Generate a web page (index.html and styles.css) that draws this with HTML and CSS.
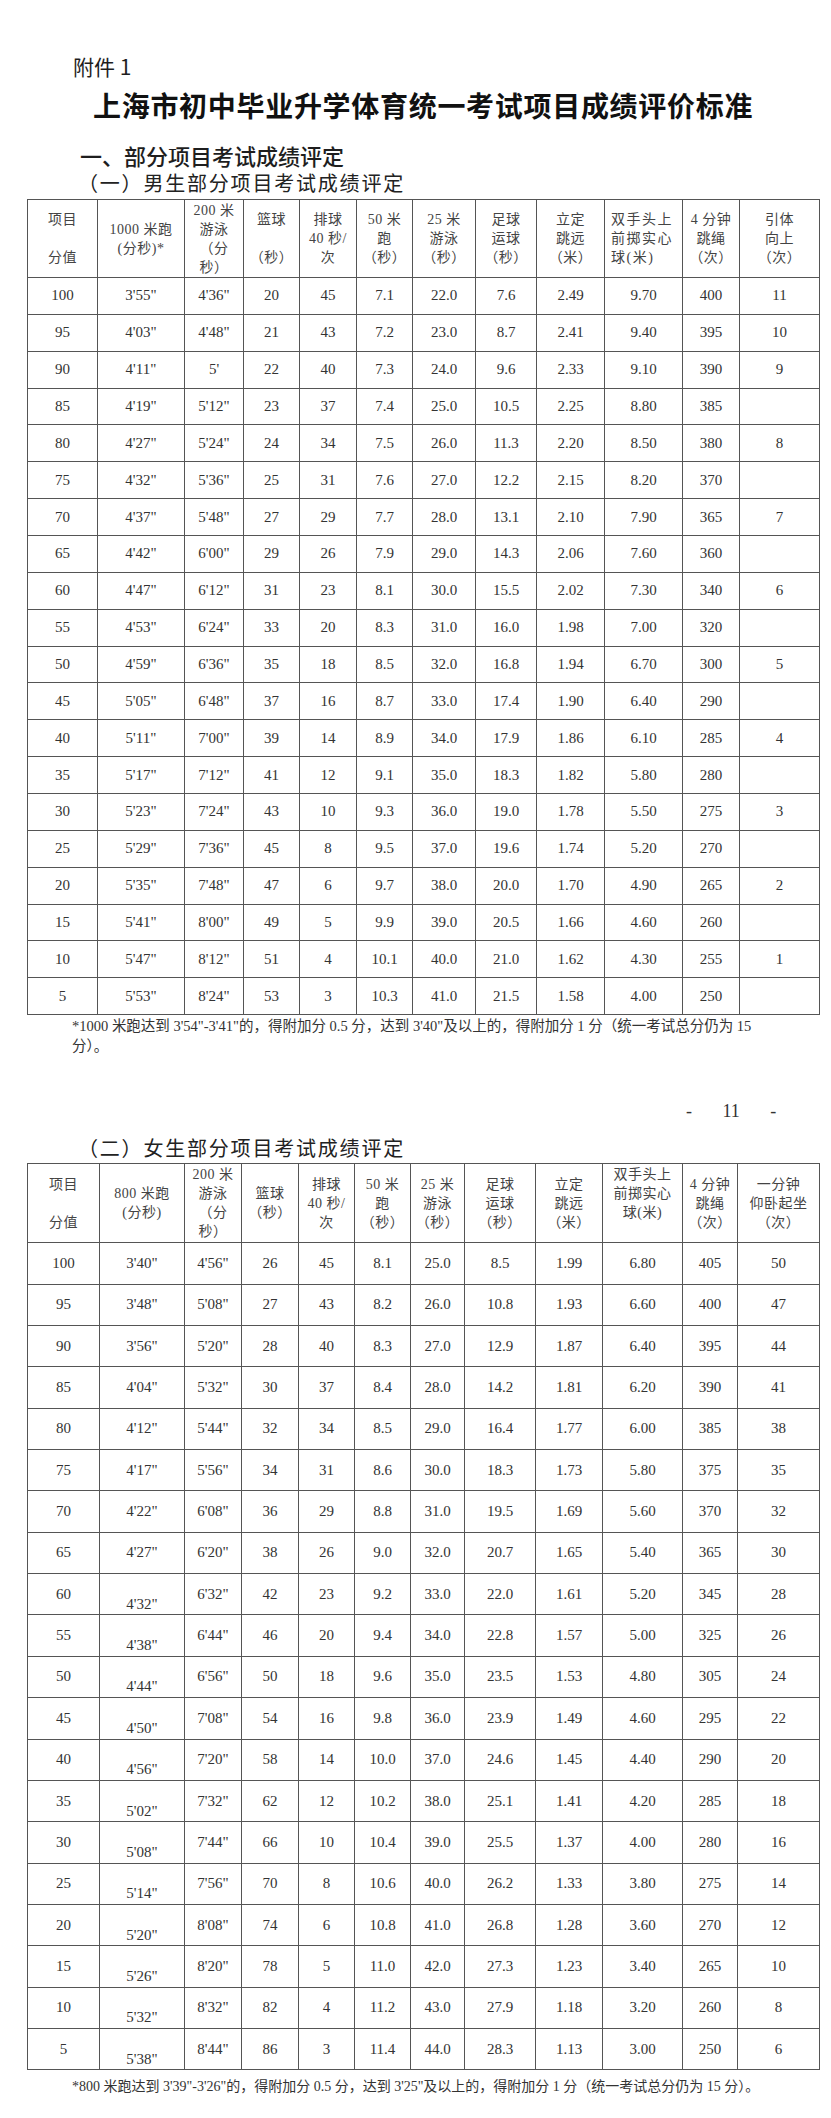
FILE: index.html
```html
<!DOCTYPE html>
<html lang="zh-CN">
<head>
<meta charset="utf-8">
<title>上海市初中毕业升学体育统一考试项目成绩评价标准</title>
<link rel="stylesheet" href="styles.css">
</head>
<body>
<div class="page">
  <div class="annex">附件 1</div>
  <h1 class="title">上海市初中毕业升学体育统一考试项目成绩评价标准</h1>
  <h2 class="sec">一、部分项目考试成绩评定</h2>
  <h3 class="sub">（一）男生部分项目考试成绩评定</h3>
  <table class="score boys">
    <colgroup>
      <col style="width:70px"><col style="width:87px"><col style="width:59px"><col style="width:56px"><col style="width:57px"><col style="width:56px"><col style="width:63px"><col style="width:61px"><col style="width:68px"><col style="width:78px"><col style="width:57px"><col style="width:80px">
    </colgroup>
    <thead>
      <tr>
        <td>项目<br>&nbsp;<br>分值</td>
        <td>1000 米跑<br>(分秒)*</td>
        <td>200 米<br>游泳<br>（分<br>秒）</td>
        <td>篮球<br>&nbsp;<br>（秒）</td>
        <td>排球<br>40 秒/<br>次</td>
        <td>50 米<br>跑<br>（秒）</td>
        <td>25 米<br>游泳<br>（秒）</td>
        <td>足球<br>运球<br>（秒）</td>
        <td>立定<br>跳远<br>（米）</td>
        <td class="left">双手头上<br>前掷实心<br>球(米)</td>
        <td>4 分钟<br>跳绳<br>（次）</td>
        <td>引体<br>向上<br>（次）</td>
      </tr>
    </thead>
    <tbody>
      <tr><td>100</td><td>3'55"</td><td>4'36"</td><td>20</td><td>45</td><td>7.1</td><td>22.0</td><td>7.6</td><td>2.49</td><td>9.70</td><td>400</td><td>11</td></tr>
      <tr><td>95</td><td>4'03"</td><td>4'48"</td><td>21</td><td>43</td><td>7.2</td><td>23.0</td><td>8.7</td><td>2.41</td><td>9.40</td><td>395</td><td>10</td></tr>
      <tr><td>90</td><td>4'11"</td><td>5'</td><td>22</td><td>40</td><td>7.3</td><td>24.0</td><td>9.6</td><td>2.33</td><td>9.10</td><td>390</td><td>9</td></tr>
      <tr><td>85</td><td>4'19"</td><td>5'12"</td><td>23</td><td>37</td><td>7.4</td><td>25.0</td><td>10.5</td><td>2.25</td><td>8.80</td><td>385</td><td></td></tr>
      <tr><td>80</td><td>4'27"</td><td>5'24"</td><td>24</td><td>34</td><td>7.5</td><td>26.0</td><td>11.3</td><td>2.20</td><td>8.50</td><td>380</td><td>8</td></tr>
      <tr><td>75</td><td>4'32"</td><td>5'36"</td><td>25</td><td>31</td><td>7.6</td><td>27.0</td><td>12.2</td><td>2.15</td><td>8.20</td><td>370</td><td></td></tr>
      <tr><td>70</td><td>4'37"</td><td>5'48"</td><td>27</td><td>29</td><td>7.7</td><td>28.0</td><td>13.1</td><td>2.10</td><td>7.90</td><td>365</td><td>7</td></tr>
      <tr><td>65</td><td>4'42"</td><td>6'00"</td><td>29</td><td>26</td><td>7.9</td><td>29.0</td><td>14.3</td><td>2.06</td><td>7.60</td><td>360</td><td></td></tr>
      <tr><td>60</td><td>4'47"</td><td>6'12"</td><td>31</td><td>23</td><td>8.1</td><td>30.0</td><td>15.5</td><td>2.02</td><td>7.30</td><td>340</td><td>6</td></tr>
      <tr><td>55</td><td>4'53"</td><td>6'24"</td><td>33</td><td>20</td><td>8.3</td><td>31.0</td><td>16.0</td><td>1.98</td><td>7.00</td><td>320</td><td></td></tr>
      <tr><td>50</td><td>4'59"</td><td>6'36"</td><td>35</td><td>18</td><td>8.5</td><td>32.0</td><td>16.8</td><td>1.94</td><td>6.70</td><td>300</td><td>5</td></tr>
      <tr><td>45</td><td>5'05"</td><td>6'48"</td><td>37</td><td>16</td><td>8.7</td><td>33.0</td><td>17.4</td><td>1.90</td><td>6.40</td><td>290</td><td></td></tr>
      <tr><td>40</td><td>5'11"</td><td>7'00"</td><td>39</td><td>14</td><td>8.9</td><td>34.0</td><td>17.9</td><td>1.86</td><td>6.10</td><td>285</td><td>4</td></tr>
      <tr><td>35</td><td>5'17"</td><td>7'12"</td><td>41</td><td>12</td><td>9.1</td><td>35.0</td><td>18.3</td><td>1.82</td><td>5.80</td><td>280</td><td></td></tr>
      <tr><td>30</td><td>5'23"</td><td>7'24"</td><td>43</td><td>10</td><td>9.3</td><td>36.0</td><td>19.0</td><td>1.78</td><td>5.50</td><td>275</td><td>3</td></tr>
      <tr><td>25</td><td>5'29"</td><td>7'36"</td><td>45</td><td>8</td><td>9.5</td><td>37.0</td><td>19.6</td><td>1.74</td><td>5.20</td><td>270</td><td></td></tr>
      <tr><td>20</td><td>5'35"</td><td>7'48"</td><td>47</td><td>6</td><td>9.7</td><td>38.0</td><td>20.0</td><td>1.70</td><td>4.90</td><td>265</td><td>2</td></tr>
      <tr><td>15</td><td>5'41"</td><td>8'00"</td><td>49</td><td>5</td><td>9.9</td><td>39.0</td><td>20.5</td><td>1.66</td><td>4.60</td><td>260</td><td></td></tr>
      <tr><td>10</td><td>5'47"</td><td>8'12"</td><td>51</td><td>4</td><td>10.1</td><td>40.0</td><td>21.0</td><td>1.62</td><td>4.30</td><td>255</td><td>1</td></tr>
      <tr><td>5</td><td>5'53"</td><td>8'24"</td><td>53</td><td>3</td><td>10.3</td><td>41.0</td><td>21.5</td><td>1.58</td><td>4.00</td><td>250</td><td></td></tr>
    </tbody>
  </table>
  <p class="note note-boys">*1000 米跑达到 3'54"-3'41"的，得附加分 0.5 分，达到 3'40"及以上的，得附加分 1 分（统一考试总分仍为 15<br>分）。</p>
  <div class="pageno">- 11 -</div>
  <h3 class="sub sub-girls">（二）女生部分项目考试成绩评定</h3>
  <table class="score girls">
    <colgroup>
      <col style="width:72px"><col style="width:85px"><col style="width:57px"><col style="width:57px"><col style="width:56px"><col style="width:56px"><col style="width:54px"><col style="width:71px"><col style="width:67px"><col style="width:80px"><col style="width:55px"><col style="width:82px">
    </colgroup>
    <thead>
      <tr>
        <td>项目<br>&nbsp;<br>分值</td>
        <td>800 米跑<br>(分秒)</td>
        <td>200 米<br>游泳<br>（分<br>秒）</td>
        <td>篮球<br>（秒）</td>
        <td>排球<br>40 秒/<br>次</td>
        <td>50 米<br>跑<br>（秒）</td>
        <td>25 米<br>游泳<br>（秒）</td>
        <td>足球<br>运球<br>（秒）</td>
        <td>立定<br>跳远<br>（米）</td>
        <td>双手头上<br>前掷实心<br>球(米)<br>&nbsp;</td>
        <td>4 分钟<br>跳绳<br>（次）</td>
        <td>一分钟<br>仰卧起坐<br>（次）</td>
      </tr>
    </thead>
    <tbody>
      <tr><td>100</td><td>3'40"</td><td>4'56"</td><td>26</td><td>45</td><td>8.1</td><td>25.0</td><td>8.5</td><td>1.99</td><td>6.80</td><td>405</td><td>50</td></tr>
      <tr><td>95</td><td>3'48"</td><td>5'08"</td><td>27</td><td>43</td><td>8.2</td><td>26.0</td><td>10.8</td><td>1.93</td><td>6.60</td><td>400</td><td>47</td></tr>
      <tr><td>90</td><td>3'56"</td><td>5'20"</td><td>28</td><td>40</td><td>8.3</td><td>27.0</td><td>12.9</td><td>1.87</td><td>6.40</td><td>395</td><td>44</td></tr>
      <tr><td>85</td><td>4'04"</td><td>5'32"</td><td>30</td><td>37</td><td>8.4</td><td>28.0</td><td>14.2</td><td>1.81</td><td>6.20</td><td>390</td><td>41</td></tr>
      <tr><td>80</td><td>4'12"</td><td>5'44"</td><td>32</td><td>34</td><td>8.5</td><td>29.0</td><td>16.4</td><td>1.77</td><td>6.00</td><td>385</td><td>38</td></tr>
      <tr><td>75</td><td>4'17"</td><td>5'56"</td><td>34</td><td>31</td><td>8.6</td><td>30.0</td><td>18.3</td><td>1.73</td><td>5.80</td><td>375</td><td>35</td></tr>
      <tr><td>70</td><td>4'22"</td><td>6'08"</td><td>36</td><td>29</td><td>8.8</td><td>31.0</td><td>19.5</td><td>1.69</td><td>5.60</td><td>370</td><td>32</td></tr>
      <tr><td>65</td><td>4'27"</td><td>6'20"</td><td>38</td><td>26</td><td>9.0</td><td>32.0</td><td>20.7</td><td>1.65</td><td>5.40</td><td>365</td><td>30</td></tr>
      <tr><td>60</td><td class="drop">4'32"</td><td>6'32"</td><td>42</td><td>23</td><td>9.2</td><td>33.0</td><td>22.0</td><td>1.61</td><td>5.20</td><td>345</td><td>28</td></tr>
      <tr><td>55</td><td class="drop">4'38"</td><td>6'44"</td><td>46</td><td>20</td><td>9.4</td><td>34.0</td><td>22.8</td><td>1.57</td><td>5.00</td><td>325</td><td>26</td></tr>
      <tr><td>50</td><td class="drop">4'44"</td><td>6'56"</td><td>50</td><td>18</td><td>9.6</td><td>35.0</td><td>23.5</td><td>1.53</td><td>4.80</td><td>305</td><td>24</td></tr>
      <tr><td>45</td><td class="drop">4'50"</td><td>7'08"</td><td>54</td><td>16</td><td>9.8</td><td>36.0</td><td>23.9</td><td>1.49</td><td>4.60</td><td>295</td><td>22</td></tr>
      <tr><td>40</td><td class="drop">4'56"</td><td>7'20"</td><td>58</td><td>14</td><td>10.0</td><td>37.0</td><td>24.6</td><td>1.45</td><td>4.40</td><td>290</td><td>20</td></tr>
      <tr><td>35</td><td class="drop">5'02"</td><td>7'32"</td><td>62</td><td>12</td><td>10.2</td><td>38.0</td><td>25.1</td><td>1.41</td><td>4.20</td><td>285</td><td>18</td></tr>
      <tr><td>30</td><td class="drop">5'08"</td><td>7'44"</td><td>66</td><td>10</td><td>10.4</td><td>39.0</td><td>25.5</td><td>1.37</td><td>4.00</td><td>280</td><td>16</td></tr>
      <tr><td>25</td><td class="drop">5'14"</td><td>7'56"</td><td>70</td><td>8</td><td>10.6</td><td>40.0</td><td>26.2</td><td>1.33</td><td>3.80</td><td>275</td><td>14</td></tr>
      <tr><td>20</td><td class="drop">5'20"</td><td>8'08"</td><td>74</td><td>6</td><td>10.8</td><td>41.0</td><td>26.8</td><td>1.28</td><td>3.60</td><td>270</td><td>12</td></tr>
      <tr><td>15</td><td class="drop">5'26"</td><td>8'20"</td><td>78</td><td>5</td><td>11.0</td><td>42.0</td><td>27.3</td><td>1.23</td><td>3.40</td><td>265</td><td>10</td></tr>
      <tr><td>10</td><td class="drop">5'32"</td><td>8'32"</td><td>82</td><td>4</td><td>11.2</td><td>43.0</td><td>27.9</td><td>1.18</td><td>3.20</td><td>260</td><td>8</td></tr>
      <tr><td>5</td><td class="drop">5'38"</td><td>8'44"</td><td>86</td><td>3</td><td>11.4</td><td>44.0</td><td>28.3</td><td>1.13</td><td>3.00</td><td>250</td><td>6</td></tr>
    </tbody>
  </table>
  <p class="note note-girls">*800 米跑达到 3'39"-3'26"的，得附加分 0.5 分，达到 3'25"及以上的，得附加分 1 分（统一考试总分仍为 15 分）。</p>
</div>
</body>
</html>
```

FILE: styles.css
```css
html, body {
  margin: 0;
  padding: 0;
  background: #ffffff;
}

body {
  color: #222;
  font-family: "Liberation Serif", "Noto Sans CJK SC", serif;
}

.page {
  width: 831px;
  padding-top: 54px;
}

.annex {
  margin-left: 73px;
  font-family: "Noto Sans CJK SC", sans-serif;
  font-size: 21px;
  line-height: 24px;
  font-weight: 400;
  color: #1e1e1e;
}

.title {
  margin: 9px 0 0 93px;
  font-family: "Noto Sans CJK SC", sans-serif;
  font-size: 28px;
  line-height: 36px;
  font-weight: 700;
  letter-spacing: 0.7px;
  color: #111;
}

.sec {
  margin: 18px 0 0 80px;
  font-family: "Noto Sans CJK SC", sans-serif;
  font-size: 22px;
  line-height: 28px;
  font-weight: 500;
  color: #1e1e1e;
}

.sub {
  margin: 1px 0 0 78px;
  font-family: "Noto Sans CJK SC", sans-serif;
  font-size: 20px;
  line-height: 26px;
  font-weight: 400;
  letter-spacing: 1.8px;
  color: #222;
}

.sub-girls {
  margin-top: 12px;
}

.score {
  margin: 3px 0 0 27px;
  border-collapse: collapse;
  table-layout: fixed;
  width: 792px;
}

.score td {
  border: 1px solid #555;
  padding: 0;
  text-align: center;
  vertical-align: middle;
  font-family: "Liberation Serif", "Noto Sans CJK SC", serif;
  font-size: 15px;
  color: #333;
}

.score thead td {
  font-size: 14px;
  line-height: 19px;
  color: #444;
  letter-spacing: 0.5px;
}

.score thead td.left {
  text-align: left;
  padding-left: 6px;
  letter-spacing: 1.5px;
}

.boys thead tr {
  height: 78px;
}

.boys tbody tr {
  height: 36.87px;
}

.girls {
  margin-top: 2px;
}

.girls thead tr {
  height: 79px;
}

.girls tbody tr {
  height: 41.37px;
}

.girls td.drop {
  padding-top: 20px;
}

.note {
  margin: 1px 0 0 72px;
  font-family: "Liberation Serif", "Noto Sans CJK SC", serif;
  font-size: 14.5px;
  line-height: 20px;
  color: #333;
}

.note-girls {
  margin-top: 7px;
  font-size: 14px;
}

.pageno {
  margin: 43px 0 0 686px;
  font-family: "Liberation Serif", serif;
  font-size: 18px;
  line-height: 24px;
  word-spacing: 26px;
  color: #333;
}
```
